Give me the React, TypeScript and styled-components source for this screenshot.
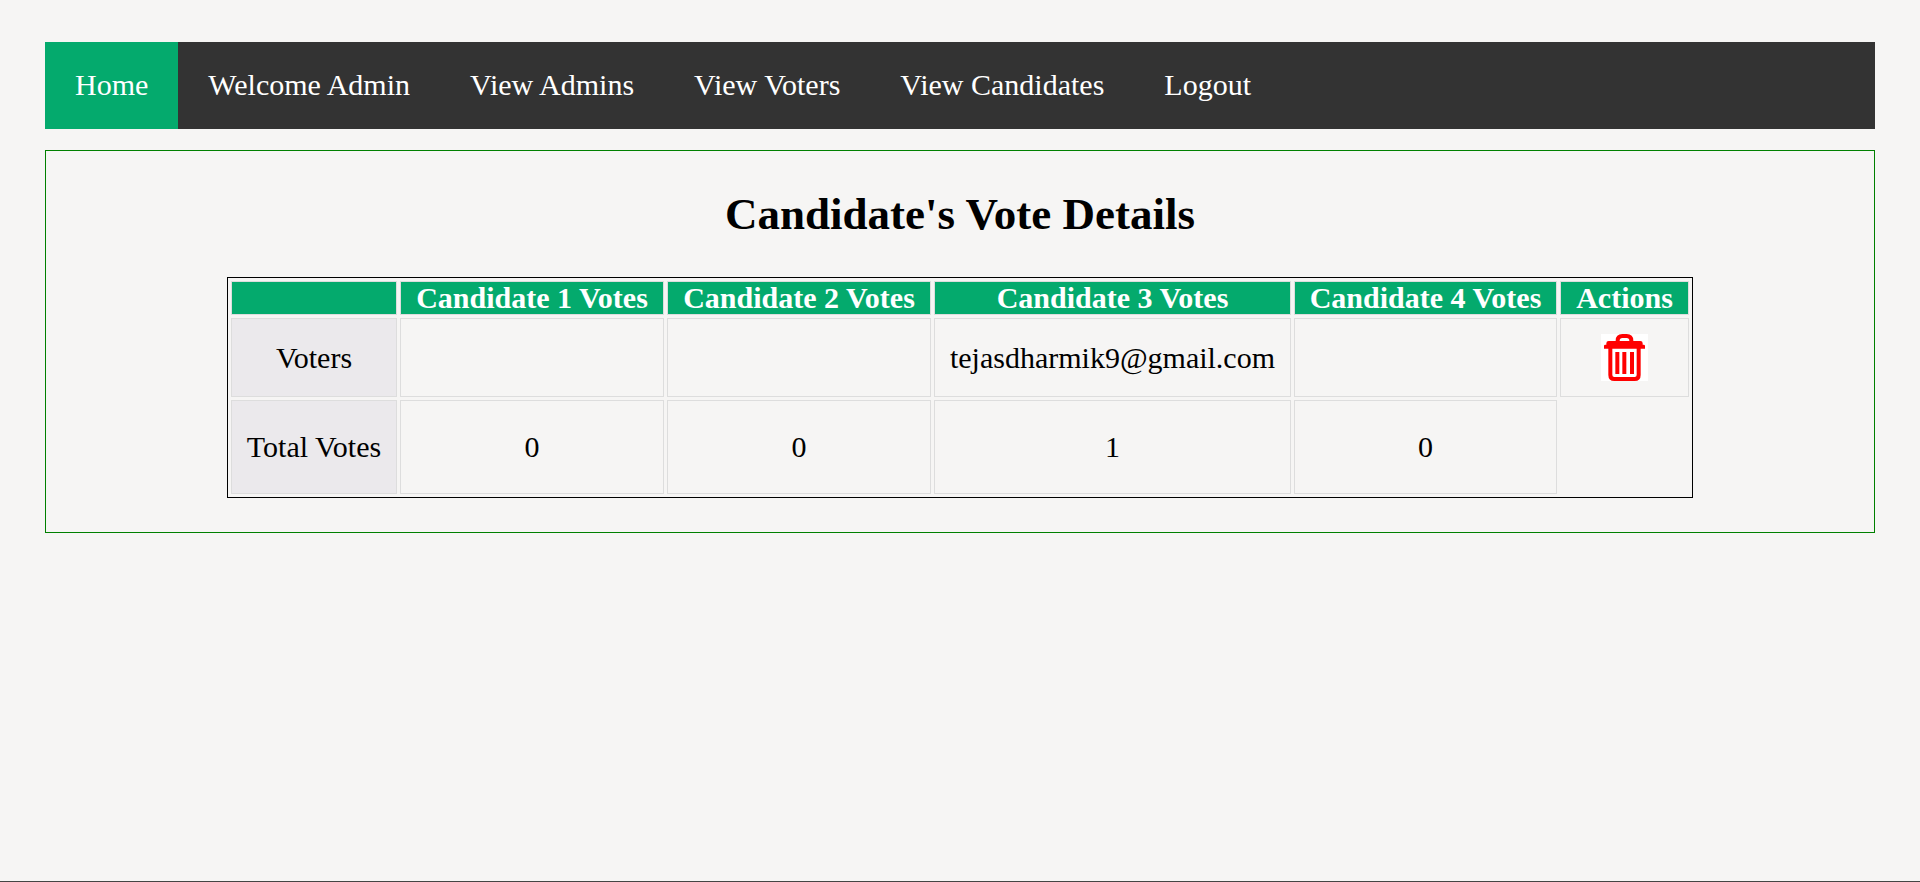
import React from "react";
import styled, { createGlobalStyle } from "styled-components";

const GlobalStyle = createGlobalStyle`
  * { box-sizing: border-box; }
  body {
    margin: 0;
    background: #f6f5f4;
    color: #000;
    font-family: "Liberation Serif", "Times New Roman", serif;
    font-size: 30px;
  }
`;

const Page = styled.div`
  min-height: 882px;
  padding: 42px 45px 0;
  border-bottom: 1px solid #444;
`;

const NavBar = styled.nav`
  display: flex;
  height: 87px;
  background: #333;
`;

const NavLink = styled.a<{ $active?: boolean }>`
  padding: 26px 30px;
  line-height: 34px;
  color: #fff;
  text-decoration: none;
  white-space: nowrap;
  background: ${({ $active }) => ($active ? "#04aa6d" : "transparent")};
`;

const Panel = styled.main`
  height: 383px;
  margin-top: 21px;
  padding-top: 37px;
  border: 1px solid green;
`;

const Title = styled.h1`
  margin: 0 0 37px;
  font-size: 45px;
  line-height: 52px;
  text-align: center;
`;

const VoteTable = styled.table`
  width: 1466px;
  margin: 0 auto;
  border: 1px solid #000;
  border-collapse: separate;
  border-spacing: 3px;
  table-layout: fixed;
  text-align: center;
`;

const Row = styled.tr<{ $height: number }>`
  height: ${({ $height }) => $height}px;
`;

const Col = styled.col<{ $width: number }>`
  width: ${({ $width }) => $width}px;
`;

const HeadCell = styled.th`
  padding: 0;
  border: 1px solid #ddd;
  background: #04aa6d;
  color: #fff;
  line-height: 32px;
  white-space: nowrap;
`;

const Cell = styled.td<{ $label?: boolean }>`
  padding: 0;
  border: 1px solid #ddd;
  background: ${({ $label }) => ($label ? "#ebe9ec" : "transparent")};
  line-height: 34px;
  white-space: nowrap;
`;

const DeleteButton = styled.button`
  display: block;
  width: 47px;
  height: 47px;
  margin: 0 auto;
  padding: 0;
  border: 0;
  background: #fff;
  cursor: pointer;
`;

const TrashIcon = () => (
  <svg width="47" height="47" viewBox="0 0 141 141" display="block">
    <path
      d="M50 26V20Q50 6 64 6H77Q91 6 91 20V26"
      fill="none"
      stroke="red"
      strokeWidth="12"
    />
    <path d="M16 28Q16 21 23 21H118Q125 21 125 28V32H128Q132 32 132 36V44H9V36Q9 32 13 32H16Z" fill="red" />
    <path
      d="M28 40V123Q28 135 40 135H101Q113 135 113 123V40"
      fill="none"
      stroke="red"
      strokeWidth="12"
    />
    <path d="M43 54h12v66h-12zM64 54h12v66h-12zM87 54h12v66h-12z" fill="red" />
  </svg>
);

const links = ["Home", "Welcome Admin", "View Admins", "View Voters", "View Candidates", "Logout"];
const columns = [
  { title: "", width: 166 },
  { title: "Candidate 1 Votes", width: 264 },
  { title: "Candidate 2 Votes", width: 264 },
  { title: "Candidate 3 Votes", width: 357 },
  { title: "Candidate 4 Votes", width: 263 },
  { title: "Actions", width: 129 },
];
const voters = ["", "", "tejasdharmik9@gmail.com", ""];
const totals = [0, 0, 1, 0];

export default function App() {
  return (
    <>
      <GlobalStyle />
      <Page>
        <NavBar>
          {links.map((label, i) => (
            <NavLink key={label} $active={i === 0}>
              {label}
            </NavLink>
          ))}
        </NavBar>
        <Panel>
          <Title>Candidate's Vote Details</Title>
          <VoteTable>
            <colgroup>
              {columns.map((c, i) => (
                <Col key={i} $width={c.width} />
              ))}
            </colgroup>
            <thead>
              <Row $height={34}>
                {columns.map((c, i) => (
                  <HeadCell key={i}>{c.title}</HeadCell>
                ))}
              </Row>
            </thead>
            <tbody>
              <Row $height={79}>
                <Cell $label>Voters</Cell>
                {voters.map((v, i) => (
                  <Cell key={i}>{v}</Cell>
                ))}
                <Cell>
                  <DeleteButton aria-label="Delete">
                    <TrashIcon />
                  </DeleteButton>
                </Cell>
              </Row>
              <Row $height={94}>
                <Cell $label>Total Votes</Cell>
                {totals.map((t, i) => (
                  <Cell key={i}>{t}</Cell>
                ))}
              </Row>
            </tbody>
          </VoteTable>
        </Panel>
      </Page>
    </>
  );
}
